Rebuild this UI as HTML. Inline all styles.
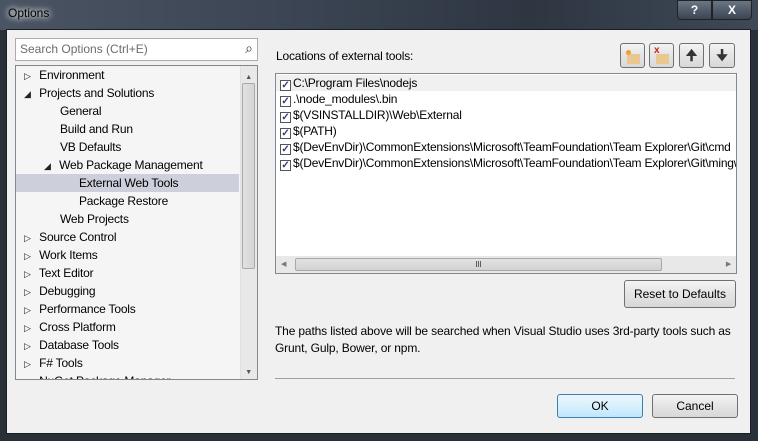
<!DOCTYPE html>
<html><head><style>
*{margin:0;padding:0;box-sizing:border-box}
body{width:758px;height:441px;overflow:hidden;background:#2a3038;font-family:"Liberation Sans",sans-serif;font-size:12px;color:#000;position:relative}
.abs{position:absolute}
#title{left:0;top:0;width:758px;height:30px;background:linear-gradient(90deg,#4a5462,#3b4452 40%,#2e3642 70%,#3e4856);}
#client{left:6px;top:29px;width:745px;height:405px;background:#f0f0f0;border:1px solid #1a1f26}
.btn{background:linear-gradient(#f3f3f3,#e4e4e4 50%,#d8d8d8);border:1px solid #707070;border-radius:3px;text-align:center}
.tree div{height:18px;line-height:18px;white-space:nowrap;letter-spacing:-0.2px}
.arr{display:inline-block;width:12px;font-size:9px;color:#222}
.list div{height:16px;line-height:16px;white-space:nowrap;padding-left:4px;letter-spacing:-0.2px}
.cb{display:inline-block;width:11px;height:11px;border:1px solid #555;background:#fff;vertical-align:-1px;margin-right:2px;font-size:10px;line-height:9px;color:#2a3a8a;font-weight:bold;text-align:center}
</style></head><body>
<div id="title" class="abs"></div>
<div class="abs" style="left:8px;top:6px;color:#000;font-size:12px;text-shadow:0 0 6px #fff,0 0 8px #fff">Options</div>
<div class="abs" style="left:677px;top:0;width:35px;height:20px;border:1px solid #222;border-radius:0 0 0 4px;background:linear-gradient(#6a7684,#3a4452);color:#fff;font-weight:bold;text-align:center;line-height:18px">?</div>
<div class="abs" style="left:712px;top:0;width:40px;height:20px;border:1px solid #222;border-radius:0 0 4px 0;background:linear-gradient(#6a7684,#3a4452);color:#fff;font-weight:bold;text-align:center;line-height:18px">X</div>
<div id="client" class="abs"></div>
<div class="abs" style="left:15px;top:38px;width:243px;height:23px;background:#fff;border:1px solid #abadb3;color:#6d6d6d;padding:3px 4px">Search Options (Ctrl+E)<span style="position:absolute;right:4px;top:1px;color:#333;font-size:14px">&#x2315;</span></div>
<div class="abs tree" style="left:15px;top:65px;width:243px;height:315px;background:#f5f5f5;border:1px solid #828790;overflow:hidden">
<div style="padding-left:8px"><span class="arr">&#9655;</span> Environment</div>
<div style="padding-left:8px"><span class="arr">&#9698;</span> Projects and Solutions</div>
<div style="padding-left:44px">General</div>
<div style="padding-left:44px">Build and Run</div>
<div style="padding-left:44px">VB Defaults</div>
<div style="padding-left:28px"><span class="arr">&#9698;</span> Web Package Management</div>
<div style="padding-left:63px;background:#cdd0db;margin-right:18px">External Web Tools</div>
<div style="padding-left:63px">Package Restore</div>
<div style="padding-left:44px">Web Projects</div>
<div style="padding-left:8px"><span class="arr">&#9655;</span> Source Control</div>
<div style="padding-left:8px"><span class="arr">&#9655;</span> Work Items</div>
<div style="padding-left:8px"><span class="arr">&#9655;</span> Text Editor</div>
<div style="padding-left:8px"><span class="arr">&#9655;</span> Debugging</div>
<div style="padding-left:8px"><span class="arr">&#9655;</span> Performance Tools</div>
<div style="padding-left:8px"><span class="arr">&#9655;</span> Cross Platform</div>
<div style="padding-left:8px"><span class="arr">&#9655;</span> Database Tools</div>
<div style="padding-left:8px"><span class="arr">&#9655;</span> F# Tools</div>
<div style="padding-left:8px"><span class="arr">&#9655;</span> NuGet Package Manager</div>
<div class="abs" style="right:0;top:0;width:17px;height:313px;background:#e8e8e8;border-left:1px solid #e0e0e0"></div>
<div class="abs" style="right:2px;top:17px;width:13px;height:186px;background:linear-gradient(90deg,#e2e2e2,#d4d4d4);border:1px solid #a8a8a8;border-radius:2px"></div>
<div class="abs" style="right:5px;top:3px;font-size:7px;color:#555">&#9650;</div>
<div class="abs" style="right:5px;top:298px;font-size:7px;color:#555">&#9660;</div>
</div>
<div class="abs" style="left:276px;top:49px;letter-spacing:-0.2px">Locations of external tools:</div>
<div class="abs btn" style="left:620px;top:43px;width:25px;height:25px"><div class="abs" style="left:6px;top:10px;width:13px;height:10px;background:#e8c890"></div><div class="abs" style="left:5px;top:6px;width:5px;height:5px;border-radius:3px;background:#f0a030"></div></div>
<div class="abs btn" style="left:649px;top:43px;width:25px;height:25px"><div class="abs" style="left:6px;top:10px;width:13px;height:10px;background:#e8c890"></div><div class="abs" style="left:4px;top:1px;color:#d02020;font-size:10px;font-weight:bold">x</div></div>
<div class="abs btn" style="left:679px;top:43px;width:25px;height:25px;font-weight:bold;font-size:14px;line-height:22px;color:#333">&#129033;</div>
<div class="abs btn" style="left:709px;top:43px;width:26px;height:25px;font-weight:bold;font-size:14px;line-height:22px;color:#333">&#129035;</div>
<div class="abs list" style="left:275px;top:73px;width:462px;height:201px;background:#fff;border:1px solid #828790;overflow:hidden;padding-top:1px">
<div style="background:#f0f0f0"><span class="cb">&#10003;</span>C:\Program Files\nodejs</div>
<div><span class="cb">&#10003;</span>.\node_modules\.bin</div>
<div><span class="cb">&#10003;</span>$(VSINSTALLDIR)\Web\External</div>
<div><span class="cb">&#10003;</span>$(PATH)</div>
<div><span class="cb">&#10003;</span>$(DevEnvDir)\CommonExtensions\Microsoft\TeamFoundation\Team Explorer\Git\cmd</div>
<div><span class="cb">&#10003;</span>$(DevEnvDir)\CommonExtensions\Microsoft\TeamFoundation\Team Explorer\Git\mingw32</div>
<div class="abs" style="left:0;bottom:0;width:460px;height:17px;background:#e8e8e8"></div>
<div class="abs" style="left:19px;bottom:2px;width:367px;height:13px;background:linear-gradient(#e2e2e2,#d2d2d2);border:1px solid #a8a8a8;border-radius:2px;text-align:center;font-size:8px;line-height:11px;color:#333;padding:0">III</div>
<div class="abs" style="left:5px;bottom:3px;font-size:7px;color:#777;padding:0;height:auto;line-height:10px">&#9664;</div>
<div class="abs" style="right:5px;bottom:3px;font-size:7px;color:#777;padding:0;height:auto;line-height:10px">&#9654;</div>
</div>
<div class="abs btn" style="left:624px;top:280px;width:112px;height:28px;line-height:26px">Reset to Defaults</div>
<div class="abs" style="left:275px;top:323px;line-height:17px;letter-spacing:-0.15px">The paths listed above will be searched when Visual Studio uses 3rd-party tools such as<br>Grunt, Gulp, Bower, or npm.</div>
<div class="abs" style="left:275px;top:378px;width:460px;height:1px;background:#a0a0a0"></div>
<div class="abs btn" style="left:557px;top:394px;width:86px;height:24px;line-height:22px;border-color:#3c7fb1;background:linear-gradient(#eaf6fd,#d9f0fc 50%,#bee6fd)">OK</div>
<div class="abs btn" style="left:652px;top:394px;width:86px;height:24px;line-height:22px">Cancel</div>
</body></html>
